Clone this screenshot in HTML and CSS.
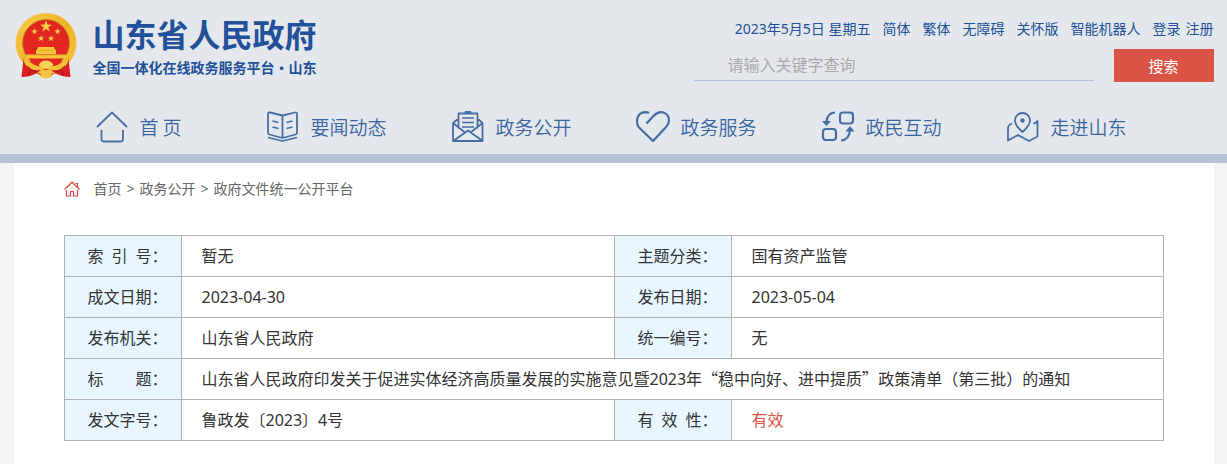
FILE: index.html
```html
<!DOCTYPE html>
<html lang="zh-CN">
<head>
<meta charset="utf-8">
<meta name="viewport" content="width=device-width, initial-scale=1">
<title>山东省人民政府</title>
<link rel="stylesheet" href="styles.css">
</head>
<body>
<header class="header">
  <div class="wrap masthead">
    <a class="brand" href="#">
      <svg class="emblem" viewBox="0 0 62 68" aria-hidden="true">
        <defs>
          <linearGradient id="gold" x1="0" y1="0" x2="1" y2="1">
            <stop offset="0" stop-color="#fbd050"/><stop offset=".5" stop-color="#efb52b"/><stop offset="1" stop-color="#f6c43c"/>
          </linearGradient>
          <path id="star" d="M0-5 1.2-1.6 4.8-1.5 1.9.6 2.9 4 0 2-2.9 4-1.9.6-4.8-1.5-1.2-1.6z" fill="#f7cf4a"/>
        </defs>
        <ellipse cx="31" cy="31" rx="30.500" ry="30" fill="url(#gold)"/>
        <circle cx="31" cy="31" r="27.500" fill="none" stroke="#dca022" stroke-width="1.200" stroke-dasharray="2 2" opacity=".4"/>
        <circle cx="31" cy="31" r="23.500" fill="#e32620" stroke="#c98a16"/>
        <use href="#star" transform="translate(31 14.500) scale(1.25)"/>
        <use href="#star" transform="translate(19.500 19.500) scale(.68)"/>
        <use href="#star" transform="translate(42.500 19.500) scale(.68)"/>
        <use href="#star" transform="translate(26 26.500) scale(.68)"/>
        <use href="#star" transform="translate(36 26.500) scale(.68)"/>
        <path d="M23 35h16l1 3H22zM21 38h20v4H21zM11 42.500h40v4H11z" fill="#f5c63c"/>
        <path d="M23 38.300h16M12 43h38" stroke="#d8901e" stroke-width=".6"/>
        <path d="M10.500 47q8 4 15 6h11q7-2 15-6l3 7-8 8H15l-8-8z" fill="#f3be34"/>
        <path d="M14 49q9 1 17 1t17-1q-6 6-12 5l-5-3-5 3q-6 1-12-5z" fill="#e02a20"/>
        <path d="M8.500 47q1 9 10 11 7 1 12.500-1 5.500 2 12.500 1 9-2 10-11l2 18q-9 0-15-4l-9.500 5-9.500-5q-6 4-15 4z" fill="#dc1d22"/>
        <path d="m22 61 4-3h10l4 3-4 1 1 3-6 1.500-6-1.500 1-3z" fill="#f4c440"/>
        <path d="M12 54q5 5 10 6m28-6q-5 5-10 6M15 58l-1 6m33-6 1 6" fill="none" stroke="#a90e18"/>
        <path d="M23.500 53q2.500-4.500 7.500-4.500t7.500 4.500l-4 3h-7z" fill="#f8d45b"/>
        <path d="M12.500 51q5 6 12 5l3-2m22-3q-5 6-12 5l-3-2" fill="none" stroke="#f4c23a" stroke-width="1.800"/>
      </svg>
      <span class="brand-text">
        <strong class="brand-name">山东省人民政府</strong>
        <span class="brand-sub">全国一体化在线政务服务平台·山东</span>
      </span>
    </a>
    <div class="tools">
      <div class="toplinks">
        <span>2023年5月5日 星期五</span>
        <a href="#">简体</a>
        <a href="#">繁体</a>
        <a href="#">无障碍</a>
        <a href="#">关怀版</a>
        <a href="#">智能机器人</a>
        <span class="account"><a href="#">登录</a><a href="#">注册</a></span>
      </div>
      <form class="search">
        <input class="search-input" type="text" placeholder="请输入关键字查询" aria-label="请输入关键字查询">
        <button class="search-button" type="button">搜索</button>
      </form>
    </div>
  </div>
  <nav class="wrap nav">
    <a class="nav-item" href="#">
      <svg class="nav-icon" viewBox="0 0 32 32" aria-hidden="true"><path d="M1 16 16 1.500 31 16M5.500 19v9q0 2.500 2.500 2.500h16.500q2.500 0 2.500-2.500v-9"/></svg>
      <span class="nav-home">首 页</span>
    </a>
    <a class="nav-item" href="#">
      <svg class="nav-icon" viewBox="0 0 32 32" aria-hidden="true"><path d="M15.500 4.500 3 1.500Q1 1 1 3v18.500q0 1.500 1.500 2l13 3.500 13-3.500q1.500-.5 1.500-2V3q0-2-2-1.500zV27M1 26.500 15.500 30 30 26.500M5.500 10l6 1.500M5.500 16l6 1.500M25.500 10l-6 1.500M25.500 16l-6 1.500"/></svg>
      要闻动态
    </a>
    <a class="nav-item" href="#">
      <svg class="nav-icon" viewBox="0 0 32 32" aria-hidden="true"><path d="M6.500 17.500v-15h19v15M13.500 2V1h5v1M6.500 7.500 1 12v18h29.500V12l-5-4.500M1 12l12 9.500M30.500 12l-12 9.500M2 29.500l14-10 14 10" /><path class="fine" d="M10 7h12M10 11.500h12M10 16h12"/></svg>
      政务公开
    </a>
    <a class="nav-item" href="#">
      <svg class="nav-icon" viewBox="0 0 32 32" aria-hidden="true"><path class="bold" d="M9.500 12.500 16.500 5q5-5 10-3.500 5.500 2 5.500 7.500 0 4-2.500 6.500L16 30 3 17.500Q-.8 14 .2 8 1.500 1.500 8.500 1.200q2 0 3.500.8"/></svg>
      政务服务
    </a>
    <a class="nav-item" href="#">
      <svg class="nav-icon" viewBox="0 0 32 32" aria-hidden="true"><g class="bold"><rect x="18" y="1.500" width="13" height="11" rx="3"/><rect x="1" y="18" width="13" height="11" rx="3"/><path d="M13 1.500Q5 2 4.500 11M19 29.500q8-.5 9-10"/></g><path class="solid" d="M0 10h9l-4.500 5zM23.500 20.500h9L28 15z"/></svg>
      政民互动
    </a>
    <a class="nav-item" href="#">
      <svg class="nav-icon" viewBox="0 0 32 32" aria-hidden="true"><path d="M15.500 21q-7.500-6.500-7.500-11.500a7.500 7.500 0 0 1 15 0q0 5-7.500 11.500zM5 12.500q-4 1.500-4 4.500v12.500l10-5.500 11 6 8.500-4.500V10q-1 2-4 2.500"/><circle class="solid" cx="15.500" cy="9.500" r="2.200"/></svg>
      走进山东
    </a>
  </nav>
</header>
<main class="wrap content">
  <nav class="crumbs" aria-label="当前位置">
    <svg class="crumb-icon" viewBox="0 0 16 16" aria-hidden="true"><path d="M.5 8.500 8 1.200l7.500 7.300M11.500 2.500h2V6M2.500 9v6h4v-4.500h3V15h4V9"/></svg>
    <a href="#">首页</a>
    <span>&gt;</span>
    <a href="#">政务公开</a>
    <span>&gt;</span>
    <a href="#">政府文件统一公开平台</a>
  </nav>
  <table class="info">
    <colgroup><col class="col-label"><col class="col-value"><col class="col-label"><col></colgroup>
    <tbody>
      <tr><th scope="row">索&ensp;引&ensp;号：</th><td>暂无</td><th scope="row">主题分类：</th><td>国有资产监管</td></tr>
      <tr><th scope="row">成文日期：</th><td>2023-04-30</td><th scope="row">发布日期：</th><td>2023-05-04</td></tr>
      <tr><th scope="row">发布机关：</th><td>山东省人民政府</td><th scope="row">统一编号：</th><td>无</td></tr>
      <tr><th scope="row">标&emsp;&emsp;题：</th><td colspan="3">山东省人民政府印发关于促进实体经济高质量发展的实施意见暨2023年<span class="quoted">“稳中向好、进中提质”</span>政策清单（第三批）的通知</td></tr>
      <tr><th scope="row">发文字号：</th><td>鲁政发〔2023〕4号</td><th scope="row">有&ensp;效&ensp;性：</th><td class="valid">有效</td></tr>
    </tbody>
  </table>
</main>
</body>
</html>
```
FILE: styles.css
```css
* { box-sizing: border-box; }

body {
  margin: 0;
  min-height: 100vh;
  display: flex;
  flex-direction: column;
  background: #f4f4f4;
  color: #333;
  font-family: "Noto Sans", "Noto Sans CJK SC", sans-serif;
  font-size: 16px;
}

a { color: inherit; text-decoration: none; }

.wrap {
  width: 100%;
  max-width: 1200px;
  margin: 0 auto;
}

.header {
  background: #e4e7ec;
  border-bottom: 9px solid #b4c4d6;
  color: #225099;
}

.masthead {
  display: flex;
  justify-content: space-between;
  height: 102px;
  padding-top: 12px;
}

.brand { display: flex; gap: 16px; padding-left: 1px; }
.emblem { width: 62px; height: 68px; }

.brand-text {
  display: flex;
  flex-direction: column;
  gap: 4px;
  font-family: "Noto Sans CJK SC", sans-serif;
  white-space: nowrap;
}
.brand-name { font-size: 32px; line-height: 42px; font-weight: 700; }
.brand-sub { font-size: 14px; line-height: 18px; font-weight: 700; }

.tools { width: 520px; }

.toplinks {
  display: flex;
  justify-content: flex-end;
  gap: 12px;
  padding-top: 6px;
  font-size: 14px;
  line-height: 22px;
  white-space: nowrap;
}
.account { display: flex; gap: 5px; }

.search { display: flex; gap: 20px; padding-top: 9px; }

.search-input {
  flex: 1;
  min-width: 0;
  height: 32px;
  padding: 0 34px;
  border: 0;
  border-bottom: 1px solid #b3c2dc;
  background: transparent;
  color: #333;
  font: inherit;
}
.search-input::placeholder { color: #aaa; opacity: 1; }

.search-button {
  width: 100px;
  height: 33px;
  padding: 0;
  border: 0;
  background: #da5445;
  color: #fff;
  font: inherit;
  font-size: 15px;
}

.nav {
  display: grid;
  grid-template-columns: repeat(6, 1fr);
  padding: 0 54px 2px 36px;
  color: #3a659f;
  font-family: "Noto Sans CJK SC", sans-serif;
  font-size: 19px;
  font-weight: 350;
}
.nav-item {
  display: flex;
  align-items: center;
  justify-content: center;
  gap: 11px;
  height: 50px;
  line-height: 28px;
  white-space: nowrap;
}
.nav-home { padding-right: 6px; }
.nav-icon {
  width: 32px;
  height: 32px;
  fill: none;
  stroke: #466ea3;
  stroke-width: 1.8;
  stroke-linejoin: round;
  overflow: visible;
}
.nav-icon .bold { stroke-width: 2.2; }
.nav-icon .fine { stroke-width: 1.4; }
.nav-icon .solid { fill: #466ea3; stroke: none; }

.content {
  flex: 1;
  padding: 16px 50px 24px;
  background: #fff;
}

.crumbs {
  display: flex;
  align-items: center;
  gap: 5px;
  font-size: 14px;
  line-height: 20px;
  color: #666;
}
.crumb-icon {
  width: 16px;
  height: 16px;
  margin-right: 9px;
  fill: none;
  stroke: #d64b40;
  stroke-width: 1.2;
}

.info {
  width: 100%;
  margin-top: 36px;
  border-collapse: collapse;
  table-layout: fixed;
  line-height: 24px;
}
.col-label { width: 117px; }
.col-value { width: 39.4%; }
.info th,
.info td {
  height: 41px;
  padding: 8px 0 8px 20px;
  border: 1px solid #b2b2b2;
  text-align: left;
  font-weight: 400;
}
.info th {
  padding-left: 23px;
  background: #e8f7ff;
  white-space: nowrap;
}
.quoted { font-family: "Noto Sans CJK SC", sans-serif; line-height: 20px; }
.info .valid { color: #da5445; }
```
